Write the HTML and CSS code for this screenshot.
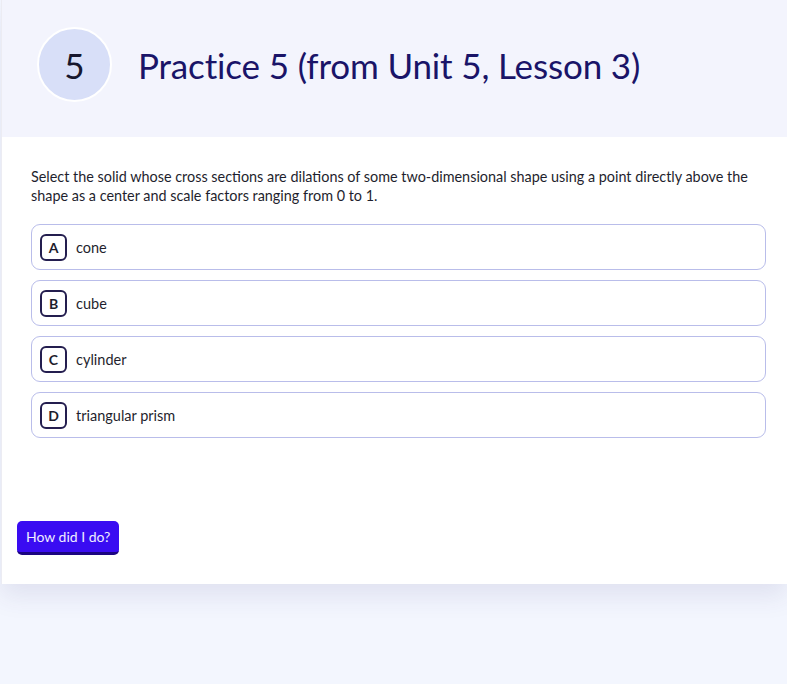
FILE: index.html
```html
<!DOCTYPE html>
<html lang="en">
<head>
<meta charset="utf-8">
<title>Practice 5</title>
<link rel="stylesheet" href="styles.css">
</head>
<body>
<main class="card">
  <header class="header">
    <div class="num">5</div>
    <h1 class="title">Practice 5 (from Unit 5, Lesson 3)</h1>
  </header>
  <section class="content">
    <p class="question">Select the solid whose cross sections are dilations of some two-dimensional shape using a point directly above the shape as a center and scale factors ranging from 0 to 1.</p>
    <ul class="options">
      <li class="option"><span class="letter">A</span><span class="label">cone</span></li>
      <li class="option"><span class="letter">B</span><span class="label">cube</span></li>
      <li class="option"><span class="letter">C</span><span class="label">cylinder</span></li>
      <li class="option"><span class="letter">D</span><span class="label">triangular prism</span></li>
    </ul>
  </section>
  <div class="actions">
    <button class="check">How did I do?</button>
  </div>
</main>
</body>
</html>
```
FILE: styles.css
```css
* { box-sizing: border-box; }
html, body { margin: 0; padding: 0; }
body {
  background: #f3f6fe;
  font-family: "Lato", "Open Sans", sans-serif;
  color: #1d1d2c;
  height: 684px;
  overflow: hidden;
}
.card {
  margin-left: 1px;
  background: #ffffff;
  border-left: 1px solid #ececf3;
  height: 584px;
  box-shadow: 0 12px 24px rgba(60, 50, 120, 0.10);
  display: flex;
  flex-direction: column;
}
.header {
  height: 137px;
  background: #f3f4fd;
  display: flex;
  align-items: center;
  padding-left: 35px;
  gap: 26px;
}
.num {
  width: 75px;
  height: 75px;
  border-radius: 50%;
  background: #d8dff8;
  border: 2px solid #ffffff;
  display: flex;
  align-items: center;
  justify-content: center;
  font-size: 35px;
  font-weight: 400;
  color: #17172e;
  margin-top: -8px;
}
.title {
  margin: 0 0 8px 0;
  font-weight: 400;
  font-size: 35px;
  color: #1a1468;
  letter-spacing: -0.15px;
}
.content {
  padding: 30px 21px 0 29px;
}
.question {
  margin: 0 0 19px 0;
  font-size: 14.4px;
  line-height: 19px;
  color: #1f1f2e;
}
.options {
  list-style: none;
  margin: 0;
  padding: 0;
  display: flex;
  flex-direction: column;
  gap: 10px;
}
.option {
  height: 46px;
  border: 1.5px solid #b9bdea;
  border-radius: 9px;
  display: flex;
  align-items: center;
  padding-left: 8px;
  gap: 9px;
  font-size: 14.5px;
  color: #1f1f2e;
}
.letter {
  width: 27px;
  height: 27px;
  border: 2px solid #241e4f;
  border-radius: 6px;
  display: flex;
  align-items: center;
  justify-content: center;
  font-weight: 700;
  font-size: 14px;
  color: #1d1d2c;
}
.actions {
  margin-top: auto;
  padding: 0 0 29px 15px;
}
.check {
  font-family: inherit;
  font-size: 14px;
  color: #f0eeff;
  background: #3a0cf2;
  border: none;
  border-bottom: 3px solid #1b0580;
  border-radius: 5px;
  height: 34px;
  padding: 0 9px;
  cursor: pointer;
}
```
